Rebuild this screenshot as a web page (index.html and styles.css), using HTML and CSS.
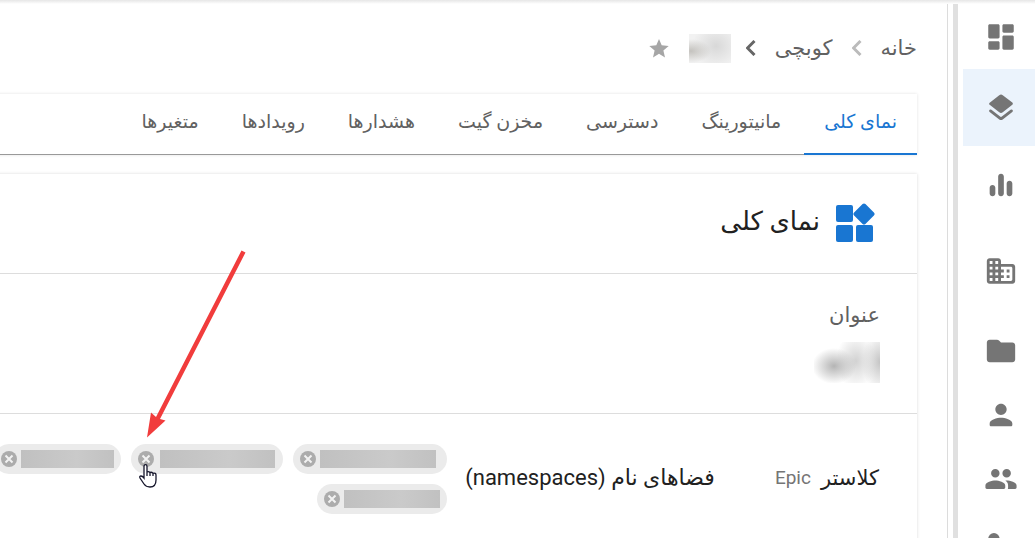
FILE: index.html
```html
<!DOCTYPE html>
<html lang="fa" dir="rtl">
<head>
<meta charset="utf-8">
<title>نمای کلی</title>
<link rel="stylesheet" href="styles.css">
</head>
<body>
<div class="topbar"></div>
<div class="layout">
  <aside class="sidebar">
    <nav class="nav">
      <a class="nav-item" href="#" aria-label="داشبورد"><svg class="nav-icon" viewBox="0 0 24 24"><path d="M4 13h6c.55 0 1-.45 1-1V4c0-.55-.45-1-1-1H4c-.55 0-1 .45-1 1v8c0 .55.45 1 1 1zm0 8h6c.55 0 1-.45 1-1v-4c0-.55-.45-1-1-1H4c-.55 0-1 .45-1 1v4c0 .55.45 1 1 1zm10 0h6c.55 0 1-.45 1-1v-8c0-.55-.45-1-1-1h-6c-.55 0-1 .45-1 1v8c0 .55.45 1 1 1zM13 4v4c0 .55.45 1 1 1h6c.55 0 1-.45 1-1V4c0-.55-.45-1-1-1h-6c-.55 0-1 .45-1 1z"/></svg></a>
      <a class="nav-item tall active" href="#" aria-label="پروژه‌ها"><svg class="nav-icon" viewBox="0 0 24 24"><path d="M12.6 18.06c-.36.28-.87.28-1.23 0l-6.15-4.78a.991.991 0 0 0-1.22 0c-.51.4-.51 1.17 0 1.57l6.76 5.26c.72.56 1.73.56 2.46 0l6.76-5.26c.51-.4.51-1.17 0-1.57l-.01-.01a.991.991 0 0 0-1.22 0l-6.15 4.79zm.63-3.02l6.76-5.26c.51-.4.51-1.18 0-1.58l-6.76-5.26c-.72-.56-1.73-.56-2.46 0L4.01 8.21c-.51.4-.51 1.18 0 1.58l6.76 5.26c.72.56 1.74.56 2.46-.01z"/></svg></a>
      <a class="nav-item tall" href="#" aria-label="آمار"><svg class="nav-icon" viewBox="0 0 24 24"><path d="M12 20c1.1 0 2-.9 2-2V6c0-1.1-.9-2-2-2s-2 .9-2 2v12c0 1.1.9 2 2 2zm-6 0c1.1 0 2-.9 2-2v-4c0-1.1-.9-2-2-2s-2 .9-2 2v4c0 1.1.9 2 2 2zm10-9v7c0 1.1.9 2 2 2s2-.9 2-2v-7c0-1.1-.9-2-2-2s-2 .9-2 2z"/></svg></a>
      <a class="nav-item spaced" href="#" aria-label="سازمان"><svg class="nav-icon" viewBox="0 0 24 24"><path fill-rule="evenodd" d="M12 7V5c0-1.1-.9-2-2-2H4c-1.1 0-2 .9-2 2v14c0 1.1.9 2 2 2h16c1.1 0 2-.9 2-2V9c0-1.1-.9-2-2-2h-8zM6 19H4v-2h2v2zm0-4H4v-2h2v2zm0-4H4V9h2v2zm0-4H4V5h2v2zm4 12H8v-2h2v2zm0-4H8v-2h2v2zm0-4H8V9h2v2zm0-4H8V5h2v2zm9 12h-7v-2h2v-2h-2v-2h2v-2h-2V9h7c.55 0 1 .45 1 1v8c0 .55-.45 1-1 1z"/><path d="M16 11h2v2h-2zM16 15h2v2h-2z"/></svg></a>
      <a class="nav-item spaced" href="#" aria-label="پرونده‌ها"><svg class="nav-icon" viewBox="0 0 24 24"><path d="M10.59 4.590C10.210 4.210 9.700 4 9.170 4H4c-1.1 0-1.990.9-1.990 2L2 18c0 1.1.9 2 2 2h16c1.1 0 2-.9 2-2V8c0-1.1-.9-2-2-2h-8l-1.410-1.410z"/></svg></a>
      <a class="nav-item" href="#" aria-label="کاربر"><svg class="nav-icon" viewBox="0 0 24 24"><path d="M12 12c2.210 0 4-1.790 4-4s-1.790-4-4-4-4 1.790-4 4 1.790 4 4 4zm0 2c-2.670 0-8 1.340-8 4v1c0 .55.45 1 1 1h14c.55 0 1-.45 1-1v-1c0-2.660-5.330-4-8-4z"/></svg></a>
      <a class="nav-item" href="#" aria-label="گروه‌ها"><svg class="nav-icon" viewBox="0 0 24 24"><path d="M16 11c1.660 0 2.990-1.340 2.990-3S17.660 5 16 5s-3 1.340-3 3 1.340 3 3 3zm-8 0c1.660 0 2.990-1.340 2.990-3S9.660 5 8 5 5 6.340 5 8s1.340 3 3 3zm0 2c-2.330 0-7 1.170-7 3.500V18c0 .55.45 1 1 1h12c.55 0 1-.45 1-1v-1.500c0-2.330-4.670-3.500-7-3.500zm8 0c-.29 0-.62.02-.97.05.02.01.03.03.04.04 1.140.83 1.930 1.940 1.930 3.410V18c0 .35-.07.69-.18 1H22c.55 0 1-.45 1-1v-1.500c0-2.330-4.670-3.500-7-3.500z"/></svg></a>
      <a class="nav-item" href="#" aria-label="مدیریت کاربران"><svg class="nav-icon" viewBox="0 0 24 24"><circle cx="7" cy="9" r="4"/><path d="M1 20c0-4 4-5 8-5v5z"/></svg></a>
    </nav>
  </aside>

  <main class="main">
    <nav class="breadcrumb" aria-label="مسیر">
      <a class="crumb" href="#">خانه</a>
      <svg class="chevron light" viewBox="0 0 10 16"><path d="M8.500 1L1.500 8l7 7"/></svg>
      <a class="crumb" href="#">کوبچی</a>
      <svg class="chevron" viewBox="0 0 10 16"><path d="M8.500 1L1.500 8l7 7"/></svg>
      <span class="veil veil-crumb"></span>
      <button class="star" type="button" aria-label="نشان کردن"><svg viewBox="0 0 20 19"><path d="M10 0l2.700 6.300 7 .6-5.300 4.600L16 18.500l-6-3.700-6 3.700 1.600-7L.3 6.900l7-.6z"/></svg></button>
    </nav>

    <nav class="tabs">
      <a class="tab selected" href="#">نمای کلی</a>
      <a class="tab" href="#">مانیتورینگ</a>
      <a class="tab" href="#">دسترسی</a>
      <a class="tab" href="#">مخزن گیت</a>
      <a class="tab" href="#">هشدارها</a>
      <a class="tab" href="#">رویدادها</a>
      <a class="tab" href="#">متغیرها</a>
    </nav>

    <section class="card">
      <header class="card-head">
        <svg class="tiles" viewBox="0 0 40 40"><rect x="0" y="2" width="17" height="17" rx="2"/><rect x="0" y="22" width="17" height="17" rx="2"/><rect x="20" y="22" width="17" height="17" rx="2"/><rect x="20" y="3" width="16" height="16" rx="2" transform="rotate(45 28 11)"/></svg>
        <h1 class="card-title">نمای کلی</h1>
      </header>
      <div class="field">
        <span class="field-label">عنوان</span>
        <span class="veil veil-title"></span>
      </div>
      <div class="details">
        <div class="cluster"><span>کلاستر</span><span class="cluster-name">Epic</span></div>
        <div class="spaces-label">فضاهای نام (namespaces)</div>
        <ul class="chips">
          <li class="chip"><span class="redacted first"></span><button class="remove" type="button" aria-label="حذف"><svg viewBox="0 0 16 16"><path d="M4.500 4.500l7 7m0-7l-7 7"/></svg></button></li>
          <li class="chip"><span class="redacted second"></span><button class="remove" type="button" aria-label="حذف"><svg viewBox="0 0 16 16"><path d="M4.500 4.500l7 7m0-7l-7 7"/></svg></button>
            <svg class="cursor" viewBox="0 0 18 24"><path d="M5 13V2.500Q5 .7 6.500 .7T8 2.500V8q1.500-1 3 .5 1.500-.7 3 .8 3-.7 3 1.700v5q0 7-6 7-4 0-6-3l-4-6q-.8-2 1-2 1.500 0 3 2zM8 8v4m3-3.500V12m3-2.700V12"/></svg></li>
          <li class="chip"><span class="redacted third"></span><button class="remove" type="button" aria-label="حذف"><svg viewBox="0 0 16 16"><path d="M4.500 4.500l7 7m0-7l-7 7"/></svg></button></li>
          <li class="chip"><span class="redacted fourth"></span><button class="remove" type="button" aria-label="حذف"><svg viewBox="0 0 16 16"><path d="M4.500 4.500l7 7m0-7l-7 7"/></svg></button></li>
        </ul>
      </div>
    </section>
  </main>
</div>
<svg class="pointer-arrow" viewBox="0 0 100 190"><path d="M94.500 0.500L98.500 2.500L13 169L18.500 170.500L0 187.500L4 162.500L9 167Z"/></svg>
</body>
</html>
```
FILE: styles.css
```css
* { box-sizing: border-box; }

body {
  display: flex;
  flex-direction: column;
  margin: 0;
  height: 100vh;
  overflow: hidden;
  position: relative;
  background: #fff;
  color: #212121;
  font-family: Roboto, "DejaVu Sans", sans-serif;
  font-size: 21px;
  line-height: 30px;
}

a { color: inherit; text-decoration: none; }
button { border: 0; padding: 0; background: none; }
svg { display: block; }

.topbar {
  flex: 0 0 4px;
  background: linear-gradient(#e6e6e6, #fff);
}

.layout { flex: 1; min-height: 0; display: flex; }

.sidebar {
  flex: 0 0 88px;
  padding-left: 5px;
  border-left: 1px solid #dcdcdc;
  overflow: hidden;
}
.nav {
  height: 100%;
  padding-top: 1px;
  border-left: 5px solid #e0e0e0;
  padding-left: 5px;
}
.nav-item {
  display: flex;
  align-items: center;
  justify-content: center;
  height: 64px;
  padding-left: 4px;
}
.nav-item.tall { height: 77px; }
.nav-item.spaced { margin-top: 16px; }
.nav-item.active { background: #ebf3fc; }
.nav-icon { width: 34px; height: 34px; fill: #757575; }

.main {
  flex: 1;
  min-width: 0;
  padding-right: 30px;
  margin-left: -8px;
}

.breadcrumb {
  display: flex;
  align-items: center;
  height: 90px;
  padding-bottom: 2px;
  color: #616161;
}
.chevron {
  width: 10px;
  height: 16px;
  margin: 0 19px;
  fill: none;
  stroke: #666;
  stroke-width: 3;
}
.chevron.light { stroke: #bbb; }
.veil-crumb {
  width: 42px;
  height: 29px;
  margin-left: 20px;
  margin-right: -4px;
  background: radial-gradient(ellipse 20px 12px at 2px 17px, #c4c2be, transparent), radial-gradient(ellipse 24px 22px at 27px 12px, #d8d8d8, transparent), #f2f2f2;
}
.star svg { width: 20px; height: 19px; fill: #a6a6a6; }

.tabs {
  display: flex;
  gap: 3px;
  height: 61px;
  margin-bottom: 19px;
  color: #616161;
  font-size: 19px;
  border-bottom: 1px solid #999;
  box-shadow: 0 0 3px rgba(0, 0, 0, .12);
}
.tab { padding: 13px 20px 0; white-space: nowrap; }
.tab.selected { color: #1976d2; border-bottom: 2px solid #1976d2; margin-bottom: -1px; }

.card { box-shadow: 0 0 3px rgba(0, 0, 0, .15); }
.card-head {
  display: flex;
  align-items: center;
  gap: 16px;
  height: 100px;
  padding-right: 41px;
  padding-bottom: 2px;
  border-bottom: 1px solid #ddd;
}
.tiles { width: 40px; height: 40px; fill: #1976d2; }
.card-title { margin: 0; padding-bottom: 4px; font-size: 26px; font-weight: 500; line-height: 36px; }

.field {
  display: flex;
  flex-direction: column;
  gap: 12px;
  height: 140px;
  padding: 26px 37px 0;
  border-bottom: 1px solid #ddd;
}
.field-label { color: #616161; }
.veil-title {
  width: 66px;
  height: 41px;
  background: radial-gradient(ellipse 22px 18px at 20px 24px, #b4b4b4, transparent), radial-gradient(ellipse 20px 28px at 42px 19px, #d2d2d2, transparent), radial-gradient(ellipse 18px 30px at 66px 20px, #c4c4c4, transparent);
}

.details {
  display: flex;
  align-items: center;
  padding: 30px 38px 30px 0;
}
.cluster { display: flex; gap: 10px; margin-left: 60px; padding-bottom: 2px; }
.cluster-name { color: #757575; font-size: 19px; }
.spaces-label { margin-left: 18px; padding-bottom: 2px; font-size: 22px; white-space: nowrap; }

.chips {
  flex: 1;
  display: flex;
  flex-wrap: wrap;
  gap: 10px;
  margin: 0;
  padding: 0;
  list-style: none;
}
.chip {
  position: relative;
  display: flex;
  align-items: center;
  justify-content: flex-end;
  gap: 4px;
  height: 30px;
  padding: 0 7px;
  border-radius: 15px;
  background: #ebebeb;
}
.remove svg {
  width: 16px;
  height: 16px;
  border-radius: 50%;
  background: #acacac;
  fill: none;
  stroke: #f2f2f2;
  stroke-width: 2;
}
.redacted { height: 18px; background: linear-gradient(90deg, #c0c0c0, #cacaca 60%, #c1c1c1); }
.first { width: 116px; margin-right: 4px; }
.second { width: 115px; margin-right: 1px; margin-left: 2px; }
.third { width: 93px; }
.fourth { width: 96px; }

.cursor {
  position: absolute;
  left: 8px;
  top: 20px;
  width: 18px;
  height: 24px;
  fill: #fff;
  stroke: #15152b;
  stroke-width: 1.3;
}
.pointer-arrow {
  position: absolute;
  left: 147px;
  top: 250px;
  width: 100px;
  height: 190px;
  fill: #f13c3c;
}
```
